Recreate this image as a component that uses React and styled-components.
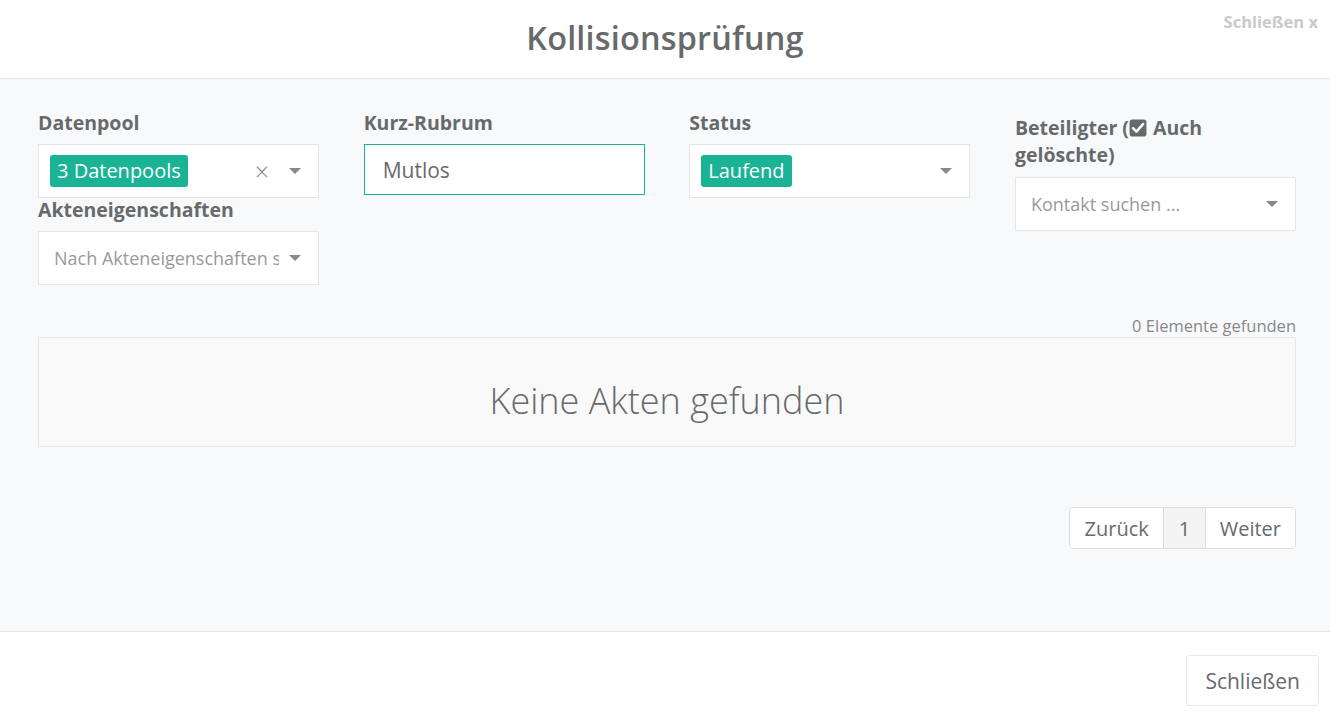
import React from 'react';
import styled, { createGlobalStyle } from 'styled-components';

const GlobalStyle = createGlobalStyle`
  html, body {
    margin: 0;
    padding: 0;
    background: #ffffff;
  }
  body {
    font-family: "Open Sans", "Liberation Sans", sans-serif;
    color: #676a6c;
  }
`;

const Modal = styled.div`
  display: flex;
  flex-direction: column;
  height: 721px;
  width: 1330px;
  background: #fff;
`;

const Header = styled.div`
  position: relative;
  height: 73px;
  padding-bottom: 5px;
  display: flex;
  align-items: center;
  justify-content: center;
  border-bottom: 1px solid #e5e5e5;
`;

const Title = styled.h1`
  margin: 0;
  font-size: 32.4px;
  font-weight: 600;
  color: #676a6c;
  letter-spacing: 0.2px;
`;

const CloseLink = styled.span`
  position: absolute;
  top: 10px;
  right: 12px;
  font-size: 16.5px;
  font-weight: 700;
  color: #c9c9c9;
`;

const Body = styled.div`
  flex: 1;
  background: #f8f9fb;
  padding: 32px 34px 0 38px;
  border-bottom: 1px solid #e5e5e5;
`;

const FilterGrid = styled.div`
  display: grid;
  grid-template-columns: repeat(4, 281px);
  justify-content: space-between;
  align-items: start;
`;

const Column = styled.div`
  display: flex;
  flex-direction: column;
  padding-top: ${p => p.$pt || 0}px;
`;

const Label = styled.label`
  display: block;
  font-size: 19.5px;
  font-weight: 700;
  line-height: ${p => p.$lh || 23}px;
  color: #676a6c;
  margin-bottom: ${p => p.$mb || 10}px;
`;

const Select = styled.div`
  height: 54px;
  box-sizing: border-box;
  background: #fff;
  border: 1px solid #e5e6e7;
  display: flex;
  align-items: center;
  padding: 0 17px 0 11px;
  gap: 8px;
`;

const Input = styled.div`
  height: 51px;
  box-sizing: border-box;
  background: #fff;
  border: 1px solid #1ab394;
  display: flex;
  align-items: center;
  padding: 0 18px;
  font-size: 21px;
  color: #676a6c;
`;

const Tag = styled.span`
  background: #1ab394;
  color: #fff;
  border-radius: 3px;
  font-size: 20px;
  line-height: 32px;
  height: 32px;
  padding: 0 7px;
  white-space: nowrap;
`;

const Placeholder = styled.span`
  flex: 1;
  font-size: 18px;
  color: #999;
  white-space: nowrap;
  overflow: hidden;
  padding-left: 4px;
  margin-right: 2px;
`;

const Spacer = styled.span`
  flex: 1;
`;

const ClearIcon = styled.span`
  font-size: 25px;
  color: #888;
  line-height: 1;
  margin-right: 12px;
  font-weight: 300;
`;

const Caret = styled.span`
  width: 0;
  height: 0;
  border-left: 6px solid transparent;
  border-right: 6px solid transparent;
  border-top: 6px solid #888;
  flex-shrink: 0;
`;

const CheckBox = styled.svg`
  width: 18px;
  height: 18px;
  vertical-align: -2px;
  margin: 0 1px 0 0;
`;

const Count = styled.div`
  text-align: right;
  font-size: 16.5px;
  color: #888;
  margin-top: 29px;
  line-height: 23px;
`;

const Empty = styled.div`
  height: 110px;
  box-sizing: border-box;
  padding-top: 16px;
  border: 1px solid #e7e7e7;
  background: #f9f9f9;
  display: flex;
  align-items: center;
  justify-content: center;
  font-size: 36px;
  font-weight: 300;
  color: #676a6c;
`;

const PagerRow = styled.div`
  display: flex;
  justify-content: flex-end;
  margin-top: 60px;
`;

const Pager = styled.div`
  display: flex;
  border: 1px solid #dddddd;
  border-radius: 4px;
  background: #fff;
  overflow: hidden;
  height: 42px;
  box-sizing: border-box;
`;

const PageItem = styled.span`
  display: flex;
  align-items: center;
  padding: 0 ${p => p.$px}px;
  font-size: 20px;
  color: #676a6c;
  background: ${p => (p.$active ? '#f4f4f4' : '#fff')};
  border-left: ${p => (p.$first ? 'none' : '1px solid #dddddd')};
`;

const Footer = styled.div`
  height: 89px;
  display: flex;
  justify-content: flex-end;
  align-items: center;
  padding-right: 11px;
`;

const Button = styled.button`
  height: 51px;
  padding: 0 18px;
  border: 1px solid #e7eaec;
  border-radius: 3px;
  background: #fff;
  font-family: inherit;
  font-size: 21px;
  color: #676a6c;
  margin-top: 8px;
`;

function Checked() {
  return (
    <CheckBox viewBox="0 0 16 16">
      <rect x="0.5" y="0.5" width="15" height="15" rx="2.5" fill="#676a6c" />
      <path d="M3.6 8.2 L6.6 11.2 L12.6 4.4" fill="none" stroke="#fff" strokeWidth="2.2" strokeLinecap="round" strokeLinejoin="round" />
    </CheckBox>
  );
}

export default function App() {
  return (
    <Modal>
      <GlobalStyle />
      <Header>
        <Title>Kollisionsprüfung</Title>
        <CloseLink>Schließen x</CloseLink>
      </Header>
      <Body>
        <FilterGrid>
          <Column>
            <Label>Datenpool</Label>
            <Select>
              <Tag>3 Datenpools</Tag>
              <Spacer />
              <ClearIcon>×</ClearIcon>
              <Caret />
            </Select>
            <Label>Akteneigenschaften</Label>
            <Select>
              <Placeholder>Nach Akteneigenschaften suchen</Placeholder>
              <Caret />
            </Select>
          </Column>
          <Column>
            <Label>Kurz-Rubrum</Label>
            <Input>Mutlos</Input>
          </Column>
          <Column>
            <Label>Status</Label>
            <Select>
              <Tag>Laufend</Tag>
              <Spacer />
              <Caret />
            </Select>
          </Column>
          <Column $pt={3}>
            <Label $lh={27} $mb={9}>
              Beteiligter (<Checked /> Auch gelöschte)
            </Label>
            <Select>
              <Placeholder>Kontakt suchen ...</Placeholder>
              <Caret />
            </Select>
          </Column>
        </FilterGrid>
        <Count>0 Elemente gefunden</Count>
        <Empty>Keine Akten gefunden</Empty>
        <PagerRow>
          <Pager>
            <PageItem $first $px={14.5}>Zurück</PageItem>
            <PageItem $active $px={14.5}>1</PageItem>
            <PageItem $px={14}>Weiter</PageItem>
          </Pager>
        </PagerRow>
      </Body>
      <Footer>
        <Button>Schließen</Button>
      </Footer>
    </Modal>
  );
}
